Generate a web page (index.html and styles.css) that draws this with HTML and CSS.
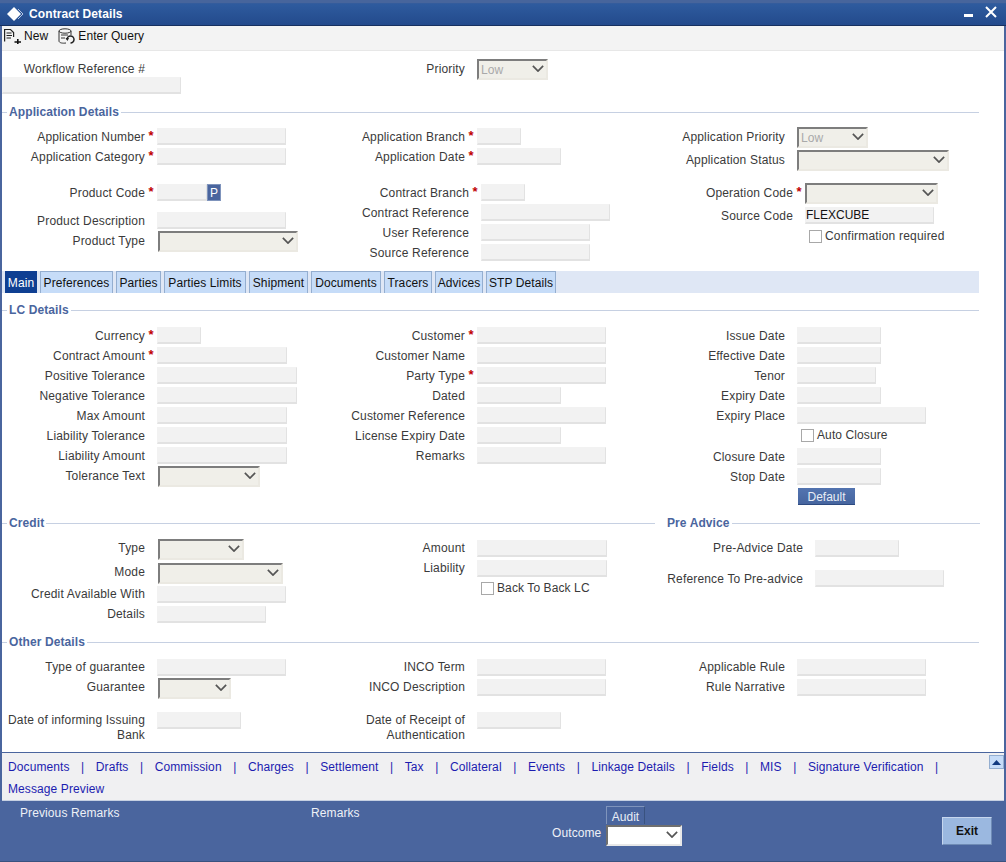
FILE: index.html
```html
<!DOCTYPE html>
<html lang="en">
<head>
<meta charset="utf-8">
<title>Contract Details</title>
<link rel="stylesheet" href="styles.css">
</head>
<body>
<div class="window">
  <header class="titlebar">
    <svg class="logo" width="18" height="18" viewBox="0 0 18 18"><path d="M8 1 L15 8 L8 15 L1 8 Z" fill="#fff"/><path d="M12 3 L17 8 L12 13" fill="none" stroke="#b9c8e2" stroke-width="1"/></svg>
    <span class="title">Contract Details</span>
    <span class="winctl">
      <svg width="10" height="4" viewBox="0 0 10 4"><rect width="9" height="3" fill="#fff"/></svg>
      <svg width="12" height="12" viewBox="0 0 12 12"><path d="M1 1 L11 11 M11 1 L1 11" stroke="#fff" stroke-width="2" fill="none"/></svg>
    </span>
  </header>
  <nav class="toolbar">
    <span class="tool">
      <svg width="17" height="16" viewBox="0 0 17 16"><path d="M0.600 13.500 V1.500 H6.500 L9.600 4.600 V9" fill="none" stroke="#222" stroke-width="1.200"/><path d="M2.500 5 H7.500 M2.500 7.500 H8 M2.500 10 H7" stroke="#222" stroke-width="1"/><path d="M10.500 14 H17 M13.800 11 V16" stroke="#111" stroke-width="1.600"/></svg>
      New
    </span>
    <span class="tool">
      <svg width="17" height="16" viewBox="0 0 17 16"><ellipse cx="7" cy="3" rx="6" ry="2.200" fill="none" stroke="#333"/><path d="M1 3 V13 C1 15 5 15.500 8 15 M13 3 V7" fill="none" stroke="#333"/><path d="M3 7 H10 M3 10 H7" stroke="#333"/><path d="M9 11.500 A3.500 3.500 0 1 1 12.500 15" fill="none" stroke="#222" stroke-width="1.500"/><path d="M7.500 10 H11 L9.500 13 Z" fill="#222"/></svg>
      Enter Query
    </span>
  </nav>

  <main class="main">
    <div class="cols top sh">
      <div class="col">
        <div class="row"><label class="lbl">Workflow Reference #</label></div>
        <input class="field wfref" disabled>
      </div>
      <div class="col">
        <div class="row"><label class="lbl">Priority</label><span class="req"></span><div class="sel w71"><span class="val">Low</span><svg class="chev" viewBox="0 0 14 8"><path d="M1 1 L7 7 L13 1" fill="none" stroke="#555" stroke-width="2"/></svg></div></div>
      </div>
    </div>

    <div class="legend"><span>Application Details</span></div>
    <div class="cols app sh">
      <div class="col">
        <div class="row"><label class="lbl">Application Number</label><span class="req">*</span><input class="field w129" disabled></div>
        <div class="row"><label class="lbl">Application Category</label><span class="req">*</span><input class="field w129" disabled></div>
        <div class="row g16"><label class="lbl">Product Code</label><span class="req">*</span><input class="field w50" disabled><button class="pbtn" type="button">P</button></div>
        <div class="row g8"><label class="lbl">Product Description</label><span class="req"></span><input class="field w129" disabled></div>
        <div class="row"><label class="lbl">Product Type</label><span class="req"></span><div class="sel m1 w140"><svg class="chev" viewBox="0 0 14 8"><path d="M1 1 L7 7 L13 1" fill="none" stroke="#555" stroke-width="2"/></svg></div></div>
      </div>
      <div class="col">
        <div class="row"><label class="lbl">Application Branch</label><span class="req">*</span><input class="field w44" disabled></div>
        <div class="row"><label class="lbl">Application Date</label><span class="req">*</span><input class="field w84" disabled></div>
        <div class="row g16"><label class="lbl l147">Contract Branch</label><span class="req">*</span><input class="field w44" disabled></div>
        <div class="row"><label class="lbl l147">Contract Reference</label><span class="req"></span><input class="field w129" disabled></div>
        <div class="row"><label class="lbl l147">User Reference</label><span class="req"></span><input class="field w109" disabled></div>
        <div class="row"><label class="lbl l147">Source Reference</label><span class="req"></span><input class="field w109" disabled></div>
      </div>
      <div class="col">
        <div class="row"><label class="lbl">Application Priority</label><span class="req"></span><div class="sel w71"><span class="val">Low</span><svg class="chev" viewBox="0 0 14 8"><path d="M1 1 L7 7 L13 1" fill="none" stroke="#555" stroke-width="2"/></svg></div></div>
        <div class="row g3"><label class="lbl">Application Status</label><span class="req"></span><div class="sel w152"><svg class="chev" viewBox="0 0 14 8"><path d="M1 1 L7 7 L13 1" fill="none" stroke="#555" stroke-width="2"/></svg></div></div>
        <div class="row g13"><label class="lbl l151">Operation Code</label><span class="req">*</span><div class="sel w133"><svg class="chev" viewBox="0 0 14 8"><path d="M1 1 L7 7 L13 1" fill="none" stroke="#555" stroke-width="2"/></svg></div></div>
        <div class="row g3"><label class="lbl l151">Source Code</label><span class="req"></span><input class="field w129 filled" value="FLEXCUBE" disabled></div>
        <div class="row g1"><span class="spacer l163"></span><span class="chk"></span><span class="chktext wide">Confirmation required</span></div>
      </div>
    </div>

    <div class="tabs">
      <span class="tab active">Main</span>
      <span class="tab">Preferences</span>
      <span class="tab">Parties</span>
      <span class="tab">Parties Limits</span>
      <span class="tab">Shipment</span>
      <span class="tab">Documents</span>
      <span class="tab">Tracers</span>
      <span class="tab">Advices</span>
      <span class="tab">STP Details</span>
    </div>

    <div class="legend lc"><span>LC Details</span></div>
    <div class="cols sh">
      <div class="col">
        <div class="row"><label class="lbl">Currency</label><span class="req">*</span><input class="field w44" disabled></div>
        <div class="row"><label class="lbl">Contract Amount</label><span class="req">*</span><input class="field w130" disabled></div>
        <div class="row"><label class="lbl">Positive Tolerance</label><span class="req"></span><input class="field w140" disabled></div>
        <div class="row"><label class="lbl">Negative Tolerance</label><span class="req"></span><input class="field w140" disabled></div>
        <div class="row"><label class="lbl">Max Amount</label><span class="req"></span><input class="field w130" disabled></div>
        <div class="row"><label class="lbl">Liability Tolerance</label><span class="req"></span><input class="field w130" disabled></div>
        <div class="row"><label class="lbl">Liability Amount</label><span class="req"></span><input class="field w130" disabled></div>
        <div class="row"><label class="lbl">Tolerance Text</label><span class="req"></span><div class="sel m1 w102"><svg class="chev" viewBox="0 0 14 8"><path d="M1 1 L7 7 L13 1" fill="none" stroke="#555" stroke-width="2"/></svg></div></div>
      </div>
      <div class="col">
        <div class="row"><label class="lbl">Customer</label><span class="req">*</span><input class="field w129" disabled></div>
        <div class="row"><label class="lbl">Customer Name</label><span class="req"></span><input class="field w129" disabled></div>
        <div class="row"><label class="lbl">Party Type</label><span class="req">*</span><input class="field w129" disabled></div>
        <div class="row"><label class="lbl">Dated</label><span class="req"></span><input class="field w84" disabled></div>
        <div class="row"><label class="lbl">Customer Reference</label><span class="req"></span><input class="field w129" disabled></div>
        <div class="row"><label class="lbl">License Expiry Date</label><span class="req"></span><input class="field w84" disabled></div>
        <div class="row"><label class="lbl">Remarks</label><span class="req"></span><input class="field w129" disabled></div>
      </div>
      <div class="col">
        <div class="row"><label class="lbl">Issue Date</label><span class="req"></span><input class="field w84" disabled></div>
        <div class="row"><label class="lbl">Effective Date</label><span class="req"></span><input class="field w84" disabled></div>
        <div class="row"><label class="lbl">Tenor</label><span class="req"></span><input class="field w79" disabled></div>
        <div class="row"><label class="lbl">Expiry Date</label><span class="req"></span><input class="field w84" disabled></div>
        <div class="row"><label class="lbl">Expiry Place</label><span class="req"></span><input class="field w129" disabled></div>
        <div class="row"><span class="spacer l155"></span><span class="chk"></span><span class="chktext">Auto Closure</span></div>
        <div class="row g1"><label class="lbl">Closure Date</label><span class="req"></span><input class="field w84" disabled></div>
        <div class="row"><label class="lbl">Stop Date</label><span class="req"></span><input class="field w84" disabled></div>
        <div class="row g1 short"><span class="spacer l143"></span><span class="req"></span><button class="bluebtn default" type="button">Default</button></div>
      </div>
    </div>

    <div class="legendrow">
      <div class="legend half"><span>Credit</span></div>
      <div class="legend halfr"><span>Pre Advice</span></div>
    </div>
    <div class="cols">
      <div class="col">
        <div class="row"><label class="lbl">Type</label><span class="req"></span><div class="sel m1 w86"><svg class="chev" viewBox="0 0 14 8"><path d="M1 1 L7 7 L13 1" fill="none" stroke="#555" stroke-width="2"/></svg></div></div>
        <div class="row g4"><label class="lbl">Mode</label><span class="req"></span><div class="sel m1 w125"><svg class="chev" viewBox="0 0 14 8"><path d="M1 1 L7 7 L13 1" fill="none" stroke="#555" stroke-width="2"/></svg></div></div>
        <div class="row g2"><label class="lbl">Credit Available With</label><span class="req"></span><input class="field w129" disabled></div>
        <div class="row"><label class="lbl">Details</label><span class="req"></span><input class="field w109" disabled></div>
      </div>
      <div class="col">
        <div class="row"><label class="lbl">Amount</label><span class="req"></span><input class="field w130" disabled></div>
        <div class="row"><label class="lbl">Liability</label><span class="req"></span><input class="field w130" disabled></div>
        <div class="row"><span class="spacer l155"></span><span class="chk"></span><span class="chktext">Back To Back LC</span></div>
      </div>
      <div class="col">
        <div class="row"><label class="lbl l161">Pre-Advice Date</label><span class="req"></span><input class="field w84" disabled></div>
        <div class="row g10 sh"><label class="lbl l161">Reference To Pre-advice</label><span class="req"></span><input class="field w129" disabled></div>
      </div>
    </div>

    <div class="legend other"><span>Other Details</span></div>
    <div class="cols">
      <div class="col">
        <div class="row"><label class="lbl">Type of guarantee</label><span class="req"></span><input class="field w129" disabled></div>
        <div class="row"><label class="lbl">Guarantee</label><span class="req"></span><div class="sel m1 w73"><svg class="chev" viewBox="0 0 14 8"><path d="M1 1 L7 7 L13 1" fill="none" stroke="#555" stroke-width="2"/></svg></div></div>
        <div class="row g15 tall"><label class="lbl">Date of informing Issuing Bank</label><span class="req"></span><input class="field w84" disabled></div>
      </div>
      <div class="col">
        <div class="row"><label class="lbl">INCO Term</label><span class="req"></span><input class="field w129" disabled></div>
        <div class="row"><label class="lbl">INCO Description</label><span class="req"></span><input class="field w129" disabled></div>
        <div class="row g15 tall"><label class="lbl">Date of Receipt of Authentication</label><span class="req"></span><input class="field w84" disabled></div>
      </div>
      <div class="col">
        <div class="row"><label class="lbl">Applicable Rule</label><span class="req"></span><input class="field w129" disabled></div>
        <div class="row"><label class="lbl">Rule Narrative</label><span class="req"></span><input class="field w129" disabled></div>
      </div>
    </div>
  </main>

  <section class="linksbar">
    <div class="links">
      <a>Documents</a><i>|</i><a>Drafts</a><i>|</i><a>Commission</a><i>|</i><a>Charges</a><i>|</i><a>Settlement</a><i>|</i><a>Tax</a><i>|</i><a>Collateral</a><i>|</i><a>Events</a><i>|</i><a>Linkage Details</a><i>|</i><a>Fields</a><i>|</i><a>MIS</a><i>|</i><a>Signature Verification</a><i>|</i><a>Message Preview</a>
    </div>
    <button class="scrollbtn" type="button" aria-label="Scroll up"><svg width="9" height="5" viewBox="0 0 9 5"><path d="M4.500 0 L9 5 H0 Z" fill="#123a80"/></svg></button>
  </section>

  <footer class="footer">
    <span class="prev">Previous Remarks</span>
    <span class="rem">Remarks</span>
    <div class="audit">
      <button class="bluebtn auditbtn" type="button">Audit</button>
      <div class="outcome"><span>Outcome</span><div class="sel w76 white"><svg class="chev" viewBox="0 0 14 8"><path d="M1 1 L7 7 L13 1" fill="none" stroke="#555" stroke-width="2"/></svg></div></div>
    </div>
    <button class="exit" type="button">Exit</button>
  </footer>
</div>
</body>
</html>
```
FILE: styles.css
```css
* { box-sizing: border-box; }
html, body { margin: 0; padding: 0; height: 100%; }
body {
  font-family: "Liberation Sans", Arial, sans-serif;
  font-size: 12px;
  letter-spacing: 0.1px;
  color: #3a3a3a;
  background: #fff;
  overflow: hidden;
}
.window {
  height: 862px;
  display: flex;
  flex-direction: column;
  border-left: 2px solid #4a659e;
  border-right: 2px solid #4a659e;
  background: #fff;
}
.titlebar {
  height: 26px;
  margin: 0 -2px;
  padding: 4px 12px 0 6px;
  display: flex;
  align-items: center;
  color: #fff;
  background: linear-gradient(#2f5c9f, #234a8c);
  border-top: 3px solid #47659c;
  border-bottom: 1px solid #17305f;
  box-shadow: inset 0 1px 0 #345c9c;
}
.logo { margin-right: 5px; margin-top: -3px; }
.title { font-weight: bold; font-size: 12px; margin-top: -4px; }
.winctl { margin-left: auto; display: flex; gap: 11px; align-items: flex-end; margin-top: -8px; margin-right: -3px; }
.winctl svg { display: block; }
.toolbar {
  height: 25px;
  flex: none;
  padding: 0 0 5px 2px;
  display: flex;
  gap: 10px;
  align-items: center;
  background: #f3f3f3;
  border-bottom: 1px solid #e7e7e7;
  color: #111;
}
.tool { display: inline-flex; align-items: center; gap: 3px; }
.main { flex: 1; min-height: 0; overflow: hidden; padding-top: 7px; }
.cols { display: grid; grid-template-columns: 320px 320px 1fr; }
.cols.top { height: 47px; }
.cols.app { height: 136px; margin-bottom: 9px; }
.col { min-width: 0; }
.row { display: flex; align-items: center; height: 20px; }
.lbl { width: 143px; flex: none; text-align: right; letter-spacing: 0.17px; }
.sh .lbl, .row.sh .lbl { padding-top: 2px; }
.l143 { width: 143px; flex: none; }
.l147 { width: 147px; flex: none; }
.l151 { width: 151px; flex: none; }
.l155 { width: 155px; flex: none; }
.l161 { width: 161px; flex: none; }
.l163 { width: 163px; flex: none; }
.spacer { display: block; }
.req { width: 12px; flex: none; text-align: center; color: #c00000; font-weight: bold; font-size: 13px; line-height: 12px; }
.g1 { margin-top: 1px; }
.g2 { margin-top: 2px; }
.g3 { margin-top: 3px; }
.g4 { margin-top: 4px; }
.g8 { margin-top: 8px; }
.g10 { margin-top: 10px; }
.g13 { margin-top: 13px; }
.g15 { margin-top: 15px; }
.g16 { margin-top: 16px; }
.field {
  display: block;
  height: 17px;
  flex: none;
  align-self: flex-start;
  padding: 0;
  margin: 2px 0 0;
  font: inherit;
  color: #111;
  background: #f2f2f2;
  border: 1px solid #f2f2f2;
  border-right-color: #e2e2e2;
  border-bottom: 2px solid #e2e2e2;
  border-radius: 0;
  opacity: 1;
  -webkit-text-fill-color: currentColor;
}
.wfref { width: 179px; margin-top: -1px; }
.w44 { width: 44px; }
.w50 { width: 50px; }
.w71 { width: 71px; }
.w73 { width: 73px; }
.w76 { width: 76px; }
.w79 { width: 79px; }
.w84 { width: 84px; }
.w86 { width: 86px; }
.w102 { width: 102px; }
.w109 { width: 109px; }
.w125 { width: 125px; }
.w129 { width: 129px; }
.w130 { width: 130px; }
.w133 { width: 133px; }
.w140 { width: 140px; }
.w152 { width: 152px; }
.sel {
  position: relative;
  flex: none;
  align-self: flex-start;
  height: 21px;
  margin-top: 1px;
  padding: 1px 0 0 2px;
  line-height: 16px;
  background: #f0efe9;
  border: 2px solid;
  border-color: #7d7d7d #ebe9e2 #ebe9e2 #7d7d7d;
  color: #a9a9a9;
}
.sel.m1 { margin-left: 1px; }
.sel.white { background: #fff; border-color: #6f6f6f #e8e8e8 #e8e8e8 #6f6f6f; }
.chev { position: absolute; right: 2px; top: 4px; width: 12px; height: 7px; }
.pbtn {
  width: 14px;
  height: 17px;
  align-self: flex-start;
  margin: 2px 0 0;
  padding: 0;
  border: 1px solid #7f94bc;
  background: #4a659e;
  color: #fff;
  font: 12px "Liberation Sans", Arial, sans-serif;
}
.chk { width: 13px; height: 13px; flex: none; margin-left: 4px; background: #fff; border: 1px solid #a8a8a8; }
.chktext { margin-left: 3px; }
.chktext.wide { letter-spacing: 0.2px; }
.legend {
  display: flex;
  align-items: center;
  height: 14px;
  margin-bottom: 7px;
  color: #4a659e;
  font-weight: bold;
  padding-right: 25px;
}
.legend::before { content: ""; width: 5px; height: 1px; margin-right: 2px; background: #c6d0e2; }
.legend::after { content: ""; flex: 1; height: 1px; margin-left: 2px; background: #c6d0e2; }
.legend.lc { margin-top: 10px; margin-bottom: 8px; }
.legend.other { margin-top: 11px; margin-bottom: 8px; }
.legendrow { display: flex; margin-top: 11px; }
.legend.half { width: 653px; padding-right: 0; margin-bottom: 8px; }
.legend.halfr { flex: 1; padding-right: 24px; margin-left: 12px; margin-bottom: 8px; }
.legend.halfr::before { display: none; }
.tabs {
  display: grid;
  grid-template-columns: 32px 73px 45px 82px 59px 70px 48px 48px 70px;
  justify-content: start;
  gap: 3px;
  height: 22px;
  margin-right: 25px;
  padding-left: 3px;
  background: #dfe7f5;
}
.tab {
  height: 22px;
  color: #111;
  background: #c6dcf8;
  border: 1px solid #94aed0;
  border-bottom: 0;
  display: flex;
  align-items: center;
  justify-content: center;
}
.tab.active { background: #0f3f92; color: #fff; border-color: #0f3f92; }
.short { height: 18px; }
.bluebtn {
  margin: 0;
  font: 12px "Liberation Sans", Arial, sans-serif;
  color: #e8edf6;
  background: #4a659e;
}
.default {
  width: 57px;
  height: 17px;
  margin-left: 1px;
  margin-top: 1px;
  padding: 2px 0 0;
  border: 0;
  border-bottom: 1px solid #2d4a80;
  background: linear-gradient(#5374b0, #46659f);
}
.tall { height: 32px; align-items: flex-start; }
.tall .lbl { line-height: 15px; padding-top: 1px; }
.tall .field { margin-top: 0; }
.linksbar {
  flex: none;
  height: 49px;
  display: flex;
  background: #f0f0f2;
  border-top: 1px solid #4a659e;
  border-bottom: 1px solid #c6d0e2;
}
.links {
  flex: 1;
  padding: 3px 0 0 6px;
  line-height: 22px;
  display: flex;
  flex-wrap: wrap;
  align-content: flex-start;
  color: #1c1cb0;
}
.links a { color: #1c1cb0; }
.links i { font-style: normal; margin: 0 11.500px; }
.scrollbtn {
  width: 15px;
  height: 14px;
  margin: 2px 0 0 0;
  padding: 0;
  display: flex;
  align-items: center;
  justify-content: center;
  background: #c6dcf8;
  border: 1px solid #94aed0;
}
.footer {
  flex: none;
  height: 61px;
  margin: 0 -2px;
  display: flex;
  color: #eef1f7;
  background: #4a659e;
  border-bottom: 1px solid #39527f;
}
.prev { width: 291px; margin: 5px 0 0 20px; }
.rem { width: 241px; margin-top: 5px; }
.audit { width: 254px; display: flex; flex-direction: column; margin-top: 5px; }
.auditbtn {
  width: 39px;
  height: 18px;
  margin-left: 54px;
  padding: 2px 0 0;
  border: 1px solid #7f94bc;
  border-right-color: #39527f;
  border-bottom: 0;
}
.outcome { display: flex; align-items: flex-start; gap: 4px; }
.outcome span { width: 50px; margin-top: 2px; }
.exit {
  width: 50px;
  height: 28px;
  margin: 16px 0 0 136px;
  padding: 0;
  font: bold 12px "Liberation Sans", Arial, sans-serif;
  color: #111;
  background: #9bb8e0;
  border: 1px solid;
  border-color: #c6d6ee #6f8bb5 #6f8bb5 #c6d6ee;
}
```
